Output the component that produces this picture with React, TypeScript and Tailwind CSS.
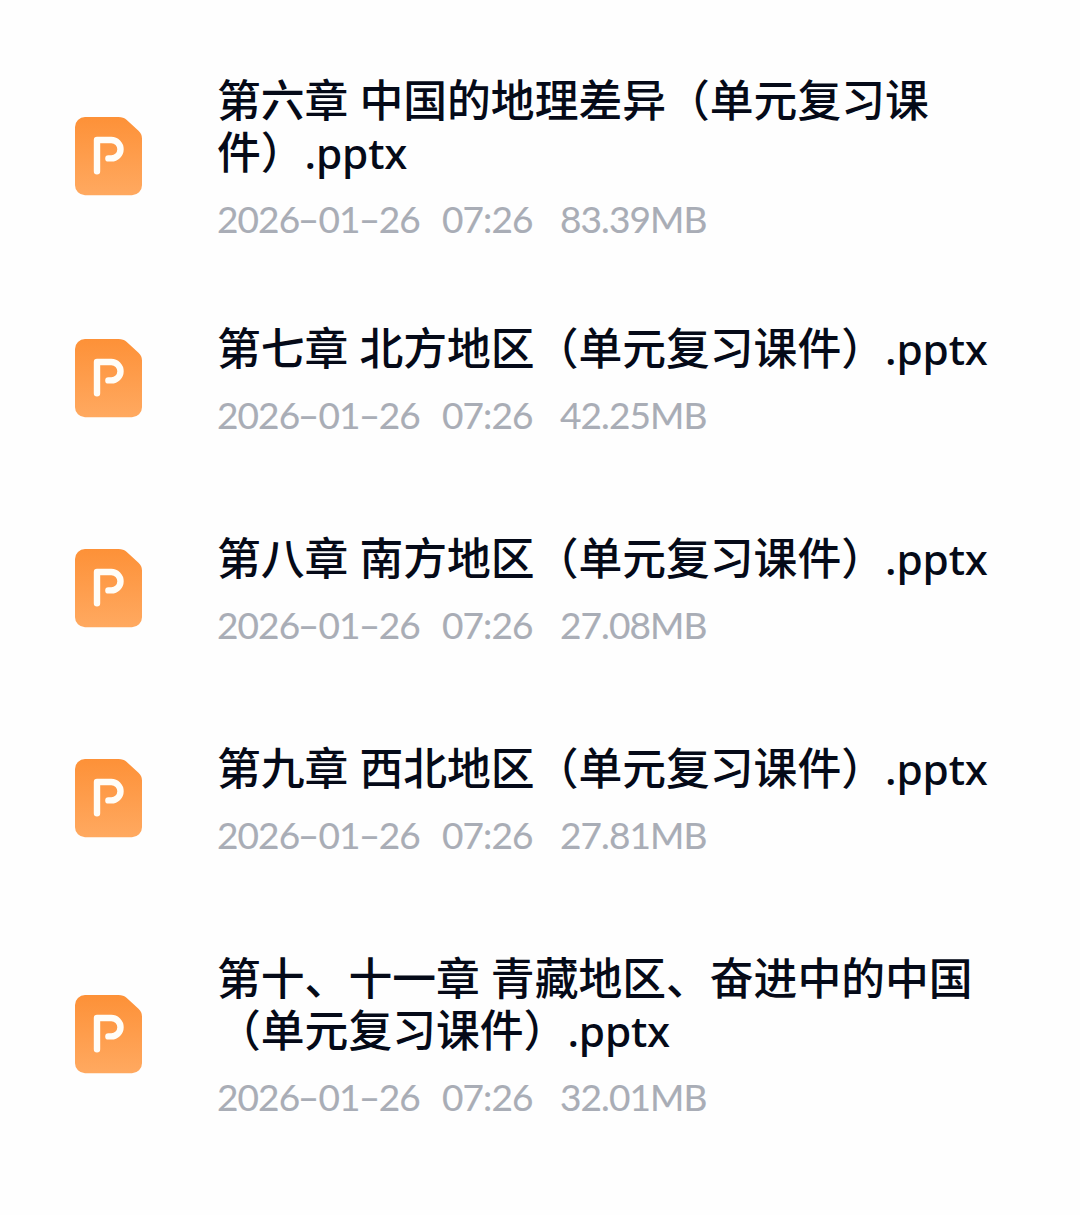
import clsx from "clsx";

const files = [
  {
    id: 1,
    lines: ["第六章 中国的地理差异（单元复习课", "件）"],
    date: "2026-01-26",
    time: "07:26",
    size: "83.39MB",
  },
  {
    id: 2,
    lines: ["第七章 北方地区（单元复习课件）"],
    date: "2026-01-26",
    time: "07:26",
    size: "42.25MB",
  },
  {
    id: 3,
    lines: ["第八章 南方地区（单元复习课件）"],
    date: "2026-01-26",
    time: "07:26",
    size: "27.08MB",
  },
  {
    id: 4,
    lines: ["第九章 西北地区（单元复习课件）"],
    date: "2026-01-26",
    time: "07:26",
    size: "27.81MB",
  },
  {
    id: 5,
    lines: ["第十、十一章 青藏地区、奋进中的中国", "（单元复习课件）"],
    date: "2026-01-26",
    time: "07:26",
    size: "32.01MB",
  },
];

function PptIcon() {
  return (
    <svg
      viewBox="0 0 67 79"
      xmlns="http://www.w3.org/2000/svg"
      aria-hidden="true"
      className="h-[79px] w-[67px] shrink-0"
    >
      <defs>
        <linearGradient id="ppt-fill" x1="0" y1="0" x2="0" y2="1">
          <stop offset="0" stopColor="#fd9138" />
          <stop offset="1" stopColor="#ffa960" />
        </linearGradient>
      </defs>
      <path
        d="M10 0H43.5Q48.5 0 51.5 2.8L63.5 13.8Q67 17 67 21.5V68.3A10 10 0 0 1 57 78.3H10A10 10 0 0 1 0 68.3V10A10 10 0 0 1 10 0Z"
        fill="url(#ppt-fill)"
      />
      <path
        d="M22 54.3V23H36.3A9.2 9.2 0 0 1 36.3 41.4H33.4"
        fill="none"
        stroke="#fffdf8"
        strokeWidth="6.4"
        strokeLinecap="round"
        strokeLinejoin="round"
      />
    </svg>
  );
}

function FileDate({ value }: { value: string }) {
  return (
    <span className="flex w-[225px]">
      {value.split("-").map((part, idx) => (
        <span key={idx} className="flex">
          {idx > 0 && (
            <span className="w-[19.2px] scale-x-160 text-center tracking-normal">
              -
            </span>
          )}
          {part}
        </span>
      ))}
    </span>
  );
}

export default function App() {
  return (
    <main className="min-h-[1215px] w-[1080px] bg-[#fefefe] pt-[75px] pl-[75px]">
      <ul>
        {files.map((file, idx) => (
          <li
            key={file.id}
            className={clsx(
              "flex items-center",
              idx === 1 && "mt-[86px]",
              idx > 1 && "mt-[100px]"
            )}
          >
            <PptIcon />
            <div className="ml-[75px]">
              <h2 className="-mt-[3px] font-['Noto_Sans_CJK_SC',sans-serif] text-[43.8px] leading-[52px] font-medium whitespace-nowrap text-[#050a18] [word-spacing:1.2px]">
                {file.lines.map((line, lineIdx) => (
                  <span key={line} className="block h-[52px]">
                    {line}
                    {lineIdx === file.lines.length - 1 && (
                      <span className="font-['Noto_Sans',sans-serif] text-[42.5px] tracking-[-0.2px]">
                        .pptx
                      </span>
                    )}
                  </span>
                ))}
              </h2>
              <p className="mt-[25px] flex h-9 items-center font-[Lato,sans-serif] text-[37px] leading-9 tracking-[-0.9px] whitespace-nowrap text-[#a9adb6] [-webkit-text-stroke:0.15px_#a9adb6]">
                <FileDate value={file.date} />
                <span className="w-[118px]">{file.time}</span>
                <span>{file.size}</span>
              </p>
            </div>
          </li>
        ))}
      </ul>
    </main>
  );
}
